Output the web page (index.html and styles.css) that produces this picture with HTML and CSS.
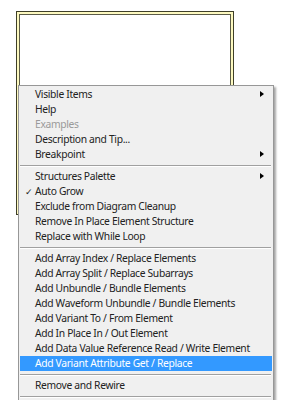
FILE: index.html
```html
<!DOCTYPE html>
<html lang="en">
<head>
    <meta charset="UTF-8">
    <title>Context menu</title>
    <link rel="stylesheet" href="styles.css">
</head>
<body>
    <div class="canvas">
        <!-- structure frame on the diagram -->
        <div class="frame">
            <div class="frame-in"></div>
        </div>

        <!-- right-click menu -->
        <ul class="menu">
            <li class="item sub">Visible Items</li>
            <li class="item">Help</li>
            <li class="item off">Examples</li>
            <li class="item">Description and Tip...</li>
            <li class="item sub">Breakpoint</li>
            <li class="sep"></li>
            <li class="item sub">Structures Palette</li>
            <li class="item checked">Auto Grow</li>
            <li class="item">Exclude from Diagram Cleanup</li>
            <li class="item">Remove In Place Element Structure</li>
            <li class="item">Replace with While Loop</li>
            <li class="sep"></li>
            <li class="item">Add Array Index / Replace Elements</li>
            <li class="item">Add Array Split / Replace Subarrays</li>
            <li class="item">Add Unbundle / Bundle Elements</li>
            <li class="item">Add Waveform Unbundle / Bundle Elements</li>
            <li class="item">Add Variant To / From Element</li>
            <li class="item">Add In Place In / Out Element</li>
            <li class="item">Add Data Value Reference Read / Write Element</li>
            <li class="item active">Add Variant Attribute Get / Replace</li>
            <li class="sep"></li>
            <li class="item">Remove and Rewire</li>
            <li class="sep"></li>
        </ul>
    </div>
</body>
</html>
```

FILE: styles.css
```css
html, body {
    margin: 0;
    background: #ffffff;
}

.canvas {
    position: relative;
    width: 284px;
    height: 400px;
    overflow: hidden;
}

/* structure frame */
.frame {
    margin: 11px 0 0 16px;
    width: 212px;
    height: 198px;
    border: 1px solid #3f3f28;
    padding: 2px;
    background: #fdf9c0;
}
.frame-in {
    height: 100%;
    box-sizing: border-box;
    border: 1px solid #5c5c48;
    background: #ffffff;
}

/* menu */
.menu {
    position: absolute;
    left: 18px;
    top: 85px;
    width: 252px;
    margin: 0;
    padding: 1px 1px;
    list-style: none;
    background: #f0f0f0;
    border: 1px solid #979797;
    box-shadow: 2px 2px 2px rgba(0, 0, 0, 0.35);
    font-family: "Noto Sans", "Open Sans", sans-serif;
    font-size: 10.3px;
    letter-spacing: -0.33px;
    color: #222222;
}
.item {
    position: relative;
    height: 15px;
    line-height: 15px;
    padding-left: 15px;
    white-space: nowrap;
}
.item.off {
    color: #9a9a9a;
}
.item.active {
    background: #3399ff;
    color: #ffffff;
}
.item.checked::before {
    content: "\2713";
    position: absolute;
    left: 5px;
    top: 0;
    font-size: 9px;
}
.item.sub::after {
    content: "";
    position: absolute;
    right: 8px;
    top: 4px;
    border-left: 4px solid #000000;
    border-top: 3.5px solid transparent;
    border-bottom: 3.5px solid transparent;
}
.sep {
    height: 7px;
    position: relative;
}
.sep::after {
    content: "";
    position: absolute;
    left: 0;
    right: 1px;
    top: 3px;
    border-top: 1px solid #a0a0a0;
    border-bottom: 1px solid #ffffff;
}
```
